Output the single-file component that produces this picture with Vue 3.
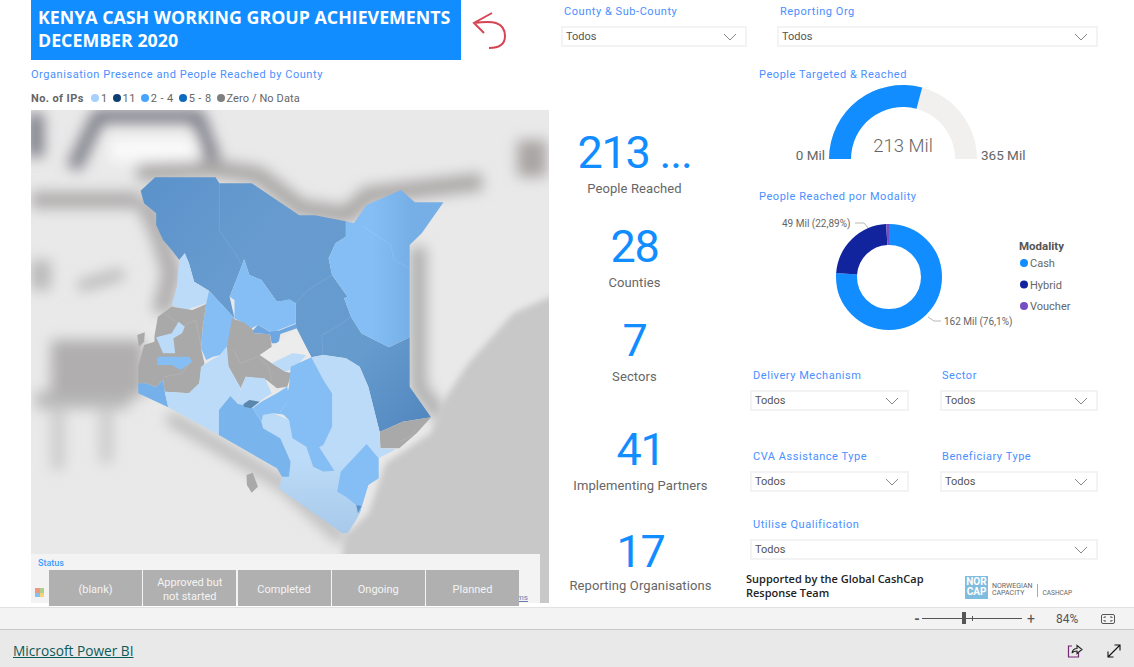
<template>
  <div class="page">
    <div class="report">
      <!-- left: title and map -->
      <div class="left">
        <div class="head">
          <h1 class="title">KENYA CASH WORKING GROUP ACHIEVEMENTS<br />DECEMBER 2020</h1>
          <svg class="back" width="36" height="38" viewBox="0 0 36 38">
            <path d="M20 1 L2 11 L12 21 M2 11 C10 10 18 9 24 11 C30 13 33 18 33 24 C33 32 27 36 17 36" />
          </svg>
        </div>
        <div class="visual-title">Organisation Presence and People Reached by County</div>
        <div class="legend">
          <b>No. of IPs</b>
          <span v-for="l in mapLegend" :key="l.text" class="legend-item">
            <i :style="{ background: l.color }"></i>{{ l.text }}
          </span>
        </div>
        <div class="map">
          <svg class="map-svg" viewBox="32 30 1502 1479" preserveAspectRatio="none">
            <defs>
              <filter id="blur" x="-20%" y="-20%" width="140%" height="140%"><feGaussianBlur stdDeviation="20" /></filter>
              <filter id="soft" x="-20%" y="-20%" width="140%" height="140%"><feGaussianBlur stdDeviation="10" /></filter>
              <clipPath id="frame"><rect x="32" y="30" width="1502" height="1479" /></clipPath>
              <linearGradient id="darkFill" gradientUnits="userSpaceOnUse" x1="350" y1="250" x2="1190" y2="950">
                <stop offset="0" stop-color="#5a92ca" />
                <stop offset="0.35" stop-color="#689cd0" />
                <stop offset="0.75" stop-color="#669bce" />
                <stop offset="1" stop-color="#5288bf" />
              </linearGradient>
              <linearGradient id="eastFill" gradientUnits="userSpaceOnUse" x1="1020" y1="0" x2="1135" y2="0">
                <stop offset="0" stop-color="#85bef5" />
                <stop offset="1" stop-color="#76aee6" />
              </linearGradient>
              <linearGradient id="southFill" gradientUnits="userSpaceOnUse" x1="0" y1="1080" x2="0" y2="1300">
                <stop offset="0" stop-color="#bcdbf8" />
                <stop offset="1" stop-color="#a8c9ea" />
              </linearGradient>
            </defs>
            <rect x="32" y="30" width="1502" height="1479" fill="#e9e9e9" />
            <g clip-path="url(#frame)">
              <g filter="url(#blur)" fill="none" stroke-linejoin="round">
                <path d="M45 40 V170" stroke="#7f7f8a" stroke-width="48" />
                <path d="M155 205 L228 48 H515 L570 205" stroke="#7f7f8a" stroke-width="42" />
                <path d="M32 300 H350" stroke="#aeabab" stroke-width="50" />
                <path d="M340 218 L560 205 L690 225 L815 325 L950 345 L1010 285 L1340 245" stroke="#aba7a7" stroke-width="52" />
                <path d="M360 300 L405 400 L440 520 L410 640" stroke="#b0aeae" stroke-width="56" />
                <path d="M1485 120 V230" stroke="#aaa5a5" stroke-width="86" />
                <path d="M1155 440 V860 L1220 950" stroke="#acacac" stroke-width="44" />
                <path d="M430 950 L760 1150 L940 1320" stroke="#b8b8b8" stroke-width="38" />
                <path d="M45 900 H320" stroke="#bababa" stroke-width="54" />
                <path d="M110 930 V1110 M250 930 V1090" stroke="#cacaca" stroke-width="38" />
                <path d="M170 560 L300 520" stroke="#b8b8b8" stroke-width="34" />
                <path d="M60 480 V570" stroke="#bababa" stroke-width="60" />
                <rect x="90" y="720" width="270" height="170" fill="#b0aeae" />
                <rect x="260" y="115" width="250" height="70" fill="#fafafa" />
              </g>
              <polygon filter="url(#soft)" fill="#c8c8c8" points="1560,580 1430,640 1300,790 1230,900 1190,1000 1060,1090 1010,1240 940,1310 920,1530 1560,1530" />
            </g>
            <polygon v-for="(r, i) in regions" :key="i" :points="r.points" :fill="r.fill" />
            <polyline v-for="(b, i) in borders" :key="'b' + i" :points="b" fill="none" stroke="#fff" stroke-opacity="0.15" stroke-width="2" />
          </svg>
          <div class="status-panel">
            <span class="status-label">Status</span>
            <span class="bing"><i></i><i></i><i></i><i></i></span>
            <span class="terms">Terms</span>
          </div>
          <div class="status-buttons">
            <div v-for="s in statuses" :key="s" class="status-btn">{{ s }}</div>
          </div>
        </div>
      </div>

      <!-- right: slicers, cards and charts -->
      <div class="right">
        <div class="top-slicers">
          <div v-for="s in topSlicers" :key="s.label" class="slicer" :class="s.cls">
            <div class="visual-title">{{ s.label }}</div>
            <div class="dropdown">
              Todos
              <svg width="14" height="8" viewBox="0 0 14 8"><path d="M1 1 L7 7 L13 1" /></svg>
            </div>
          </div>
        </div>
        <div class="lower">
          <div class="kpis">
            <div v-for="k in kpis" :key="k.label" class="kpi">
              <div class="kpi-num">{{ k.value }}</div>
              <div class="kpi-label">{{ k.label }}</div>
            </div>
          </div>
          <div class="charts">
            <div class="visual-title chart-title first">People Targeted &amp; Reached</div>
            <svg class="gauge" width="352" height="88" viewBox="746 82 352 88">
              <path :d="gaugeArc(0, 1)" fill="#f1f0ef" />
              <path :d="gaugeArc(0, 213 / 365)" fill="#118dff" />
              <text x="903" y="152" text-anchor="middle" class="gauge-value">213 Mil</text>
              <text x="825" y="160" text-anchor="end" class="gauge-end">0 Mil</text>
              <text x="981" y="160" class="gauge-end">365 Mil</text>
            </svg>
            <div class="visual-title chart-title">People Reached por Modality</div>
            <svg class="donut" width="352" height="149" viewBox="746 204 352 149">
              <circle
                v-for="d in donut"
                :key="d.name"
                cx="889"
                cy="277"
                r="42.5"
                fill="none"
                stroke-width="21"
                :stroke="d.color"
                :stroke-dasharray="d.dash"
                :stroke-dashoffset="d.offset"
                transform="rotate(-90 889 277)"
              />
              <path d="M855 223 H864 L868 228 M928 317 L934 321 H941" fill="none" stroke="#b8b8b8" />
              <text x="782" y="227" class="donut-label">49 Mil (22,89%)</text>
              <text x="944" y="325" class="donut-label">162 Mil (76,1%)</text>
              <text x="1019" y="250" class="legend-title">Modality</text>
              <g v-for="(d, i) in donut" :key="'l' + d.name">
                <circle cx="1024" :cy="263 + i * 21.5" r="4" :fill="d.color" />
                <text x="1030" :y="267 + i * 21.5" class="legend-text">{{ d.name }}</text>
              </g>
            </svg>
            <div class="slicer-grid">
              <div v-for="s in slicers" :key="s.label" class="slicer" :class="s.cls">
                <div class="visual-title">{{ s.label }}</div>
                <div class="dropdown">
                  Todos
                  <svg width="14" height="8" viewBox="0 0 14 8"><path d="M1 1 L7 7 L13 1" /></svg>
                </div>
              </div>
            </div>
            <div class="support">
              <div class="support-text">Supported by the Global CashCap<br />Response Team</div>
              <div class="logo">
                <div class="nor">NOR<br />CAP</div>
                <div class="nor-name">NORWEGIAN<br />CAPACITY</div>
                <div class="nor-sep">CASHCAP</div>
              </div>
            </div>
          </div>
        </div>
      </div>
    </div>

    <div class="zoombar">
      <span class="zoom-sign minus">-</span>
      <div class="slider"><i class="tick"></i><i class="thumb"></i></div>
      <span class="zoom-sign">+</span>
      <span class="zoom-pct">84%</span>
      <svg class="fit" width="14" height="10" viewBox="0 0 14 10">
        <rect x="0.5" y="0.5" width="13" height="9" rx="1.5" fill="none" stroke="#555" />
        <path d="M3 4 V3 H5 M9 3 H11 V4 M11 6 V7 H9 M5 7 H3 V6" fill="none" stroke="#555" />
      </svg>
    </div>

    <div class="footer">
      <a class="pbi-link">Microsoft Power BI</a>
      <div class="foot-icons">
        <svg width="16" height="14" viewBox="0 0 16 14" fill="none">
          <path d="M5 2 H1.500 V13 H11.500 V9" stroke="#742774" stroke-width="1.2" />
          <path d="M5 9 C5.500 6 8 4.500 10 4.500 V1.500 L15 5.500 L10 9.500 V7 C8 7 6 7.500 5 9 Z" stroke="#222" stroke-width="1.1" />
        </svg>
        <svg width="14" height="14" viewBox="0 0 14 14" fill="none" stroke="#111" stroke-width="1.1">
          <path d="M1 13 L13 1 M7.500 1 H13 V6.500 M1 7.500 V13 H6.500" />
        </svg>
      </div>
    </div>
  </div>
</template>

<script setup>
const mapLegend = [
  { text: '1', color: '#a6d1fb' },
  { text: '11', color: '#0e3f72' },
  { text: '2 - 4', color: '#48a5fd' },
  { text: '5 - 8', color: '#0d6abf' },
  { text: 'Zero / No Data', color: '#7f7f7f' }
]

const statuses = ['(blank)', 'Approved but not started', 'Completed', 'Ongoing', 'Planned']

const topSlicers = [
  { label: 'County & Sub-County', cls: 'w186' },
  { label: 'Reporting Org', cls: 'w321' }
]

const slicers = [
  { label: 'Delivery Mechanism', cls: '' },
  { label: 'Sector', cls: '' },
  { label: 'CVA Assistance Type', cls: 'row2' },
  { label: 'Beneficiary Type', cls: 'row2' },
  { label: 'Utilise Qualification', cls: 'wide' }
]

const kpis = [
  { value: '213 ...', label: 'People Reached' },
  { value: '28', label: 'Counties' },
  { value: '7', label: 'Sectors' },
  { value: '41', label: 'Implementing Partners' },
  { value: '17', label: 'Reporting Organisations' }
]

// map shapes, painted back to front
const LIGHT = '#bcdbf8'
const MID = '#85bef5'
const GREY = '#a9a9a9'
const regions = [
  { fill: 'url(#darkFill)', points: '350,272 392,232 567,232 578,250 672,250 810,346 855,346 945,364 945,410 915,430 895,475 905,525 950,590 940,595 960,650 990,700 1070,742 1130,712 1130,860 1192,952 1110,965 1043,996 1010,860 985,800 945,775 880,765 845,772 800,680 800,610 782,600 745,605 700,540 665,525 650,478 635,520 608,590 622,655 548,572 505,545 490,490 478,460 462,480 440,450 415,420 395,375 395,340 360,310' },
  { fill: 'url(#eastFill)', points: '945,364 968,370 1005,315 1105,270 1145,307 1228,307 1165,400 1130,435 1130,712 1070,742 990,700 960,650 940,595 950,590 905,525 895,475 915,430 945,410' },
  { fill: MID, points: '650,478 665,525 700,540 745,605 782,598 800,610 800,670 750,690 735,700 690,675 672,685 622,655 622,600 608,590 635,520' },
  { fill: '#6da6e0', points: '672,695 690,675 725,695 750,692 800,672 803,685 755,702 750,730 730,730 725,703 680,700' },
  { fill: LIGHT, points: '462,480 478,460 490,490 505,545 548,572 540,610 480,630 440,615 455,560' },
  { fill: MID, points: '548,572 622,655 600,740 580,765 560,770 540,780 525,745 530,680 540,610' },
  { fill: '#ececec', points: '695,765 800,688 845,772 800,760 785,760 730,790' },
  { fill: GREY, points: '390,708 400,650 440,620 500,630 540,612 530,680 525,745 535,790 525,810 520,850 490,880 420,875 415,840 395,862 365,850 343,850 343,800 360,735 390,725' },
  { fill: GREY, points: '340,705 362,697 360,725 345,740' },
  { fill: GREY, points: '657,1125 675,1118 690,1160 672,1178 658,1155' },
  { fill: GREY, points: '600,740 615,655 650,668 672,685 680,700 725,703 730,740 695,765 730,790 770,815 788,820 775,860 745,865 715,840 655,830 640,865 605,800 597,780' },
  { fill: GREY, points: '1043,996 1110,965 1192,952 1150,1000 1100,1045 1045,1045' },
  { fill: LIGHT, points: '395,712 440,700 460,665 478,680 470,700 445,715 450,760 415,760' },
  { fill: MID, points: '398,770 490,770 500,785 465,810 440,795 398,795' },
  { fill: '#75b0ea', points: '343,850 365,850 395,862 415,840 420,875 430,922 343,880' },
  { fill: LIGHT, points: '420,875 490,880 520,850 525,800 555,780 580,765 600,740 605,800 640,865 635,890 632,912 610,888 577,930 577,1005 430,922' },
  { fill: LIGHT, points: '640,865 655,830 710,835 730,880 700,900 675,925 650,915 632,912 635,890' },
  { fill: LIGHT, points: '730,790 790,760 830,765 800,800 770,815' },
  { fill: 'url(#southFill)', points: '845,772 880,765 945,775 985,800 1010,860 1043,996 1045,1045 1090,1048 1040,1075 1040,1135 1010,1155 985,1240 975,1260 950,1300 935,1300 750,1165 760,1130 780,1130 785,1085 755,1015 705,985 700,965 705,945 735,940 780,960 790,1015 830,1040 850,1100 880,1115 912,1112 868,1042 880,1035 905,980 905,880 880,840' },
  { fill: MID, points: '845,772 880,840 905,880 905,980 880,1035 868,1042 912,1112 880,1115 850,1100 830,1040 790,1015 780,960 755,935 770,900 780,860 785,800' },
  { fill: '#7ab4ec', points: '577,930 610,888 632,912 650,915 675,925 700,965 705,985 755,1015 785,1085 780,1130 760,1130 745,1105 577,1005' },
  { fill: MID, points: '675,925 700,905 745,880 775,860 782,900 755,935 775,945 735,940 705,945 700,965' },
  { fill: MID, points: '1005,1032 1040,1075 1040,1135 1010,1155 985,1240 975,1215 945,1190 920,1175 930,1115' },
  { fill: '#5f93c6', points: '975,1215 990,1218 980,1240' },
  { fill: '#5a87ad', points: '648,912 665,900 695,905 670,925 650,920' }
]

const borders = [
  '578,250 578,390 600,425 625,460 640,490',
  '800,610 835,570 905,525',
  '995,380 1075,435 1085,480 1130,505',
  '960,650 920,680 875,705 878,765',
  '420,640 470,680 510,660 525,740',
  '620,750 640,790 690,770 720,800 730,840',
  '420,830 470,820 490,790',
  '1100,1025 1130,1010 1150,990',
  '755,935 775,905'
]

// gauge: t runs 0..1 from left to right over the half circle
function gaugeArc(from, to) {
  const cx = 903
  const cy = 159
  const pt = (r, t) => {
    const a = Math.PI * (1 - t)
    return `${(cx + r * Math.cos(a)).toFixed(2)} ${(cy - r * Math.sin(a)).toFixed(2)}`
  }
  return `M${pt(74, from)} A74 74 0 0 1 ${pt(74, to)} L${pt(52, to)} A52 52 0 0 0 ${pt(52, from)} Z`
}

const circ = 2 * Math.PI * 42.5
const modality = [
  { name: 'Cash', share: 0.761, color: '#118dff' },
  { name: 'Hybrid', share: 0.2289, color: '#12239e' },
  { name: 'Voucher', share: 0.0101, color: '#744ec2' }
]
let run = 0
const donut = modality.map((m) => {
  const item = { ...m, dash: `${m.share * circ} ${circ}`, offset: -run * circ }
  run += m.share
  return item
})
</script>

<style>
html, body { margin: 0; background: #fff; }
</style>

<style scoped>
.page {
  width: 1134px;
  height: 667px;
  display: flex;
  flex-direction: column;
  overflow: hidden;
  font-family: Roboto, "Liberation Sans", sans-serif;
  background: #fff;
}
.report {
  height: 607px;
  display: flex;
}
.left {
  width: 518px;
  margin-left: 31px;
  flex: none;
}
.head {
  display: flex;
  height: 60px;
}
.title {
  width: 430px;
  height: 60px;
  box-sizing: border-box;
  margin: 0;
  padding: 6px 0 0 7px;
  background: #118dff;
  color: #fff;
  font-family: "Open Sans", sans-serif;
  font-size: 17.8px;
  line-height: 23px;
  font-weight: 700;
  white-space: nowrap;
}
.back {
  margin: 12px 0 0 11px;
  fill: none;
  stroke: #d64554;
  stroke-width: 2;
}
.visual-title {
  color: #4a8fff;
  font-size: 11px;
  line-height: 14px;
  letter-spacing: 0.55px;
  white-space: nowrap;
}
.left > .visual-title {
  margin-top: 8px;
}
.legend {
  display: flex;
  align-items: center;
  height: 14px;
  margin-top: 9px;
  color: #666;
  font-size: 11px;
  letter-spacing: 0.4px;
}
.legend b {
  width: 60px;
}
.legend-item {
  display: flex;
  align-items: center;
  margin-right: 5px;
}
.legend-item:last-child {
  letter-spacing: 0.1px;
}
.legend-item i {
  width: 8px;
  height: 8px;
  border-radius: 50%;
  margin-right: 2px;
}
.map {
  position: relative;
  height: 493px;
  margin-top: 5px;
}
.map-svg {
  display: block;
  width: 518px;
  height: 493px;
}
.status-panel {
  position: absolute;
  left: 0;
  right: 9px;
  bottom: 0;
  height: 49px;
  background: #f3f3f3;
}
.status-label {
  position: absolute;
  left: 7px;
  top: 4px;
  color: #3f9bff;
  font-size: 9px;
  font-weight: 500;
}
.bing {
  position: absolute;
  left: 4px;
  top: 34px;
  width: 9px;
  display: grid;
  grid-template-columns: 1fr 1fr;
  opacity: 0.6;
}
.bing i { height: 4.500px; }
.bing i:nth-child(1) { background: #f05a3a; }
.bing i:nth-child(2) { background: #80bb3f; }
.bing i:nth-child(3) { background: #3ca5e8; }
.bing i:nth-child(4) { background: #fbbc2c; }
.terms {
  position: absolute;
  right: 12px;
  top: 39px;
  color: #6a7fb5;
  font-size: 8px;
  text-decoration: underline;
}
.status-buttons {
  position: absolute;
  left: 18px;
  top: 460px;
  display: flex;
  gap: 1.250px;
}
.status-btn {
  width: 93px;
  height: 36px;
  box-sizing: border-box;
  padding: 4px 8px 0;
  display: flex;
  align-items: center;
  justify-content: center;
  text-align: center;
  background: #b0b0b0;
  color: #f4f4f4;
  font-size: 11px;
  line-height: 14px;
}
.right {
  flex: 1;
  min-width: 0;
}
.top-slicers {
  height: 47px;
  padding: 5px 0 0 12px;
  box-sizing: border-box;
  display: flex;
  gap: 30px;
}
.slicer .visual-title {
  padding-left: 3px;
}
.w186 { width: 186px; }
.w321 { width: 321px; }
.dropdown {
  height: 21px;
  margin-top: 7px;
  box-sizing: border-box;
  padding: 0 8px 0 3px;
  display: flex;
  align-items: center;
  justify-content: space-between;
  border: 2px solid #f3f3f3;
  color: #555;
  font-size: 11px;
}
.dropdown svg {
  fill: none;
  stroke: #888;
}
.lower {
  display: flex;
}
.kpis {
  width: 197px;
  padding-right: 26px;
  box-sizing: border-box;
  text-align: center;
  flex: none;
}
.kpi { margin-top: 24px; }
.kpi:nth-child(1) { margin-top: 81px; }
.kpi:nth-child(4) { margin-top: 39px; padding-left: 12px; }
.kpi:nth-child(5) { margin-top: 32px; padding-left: 12px; }
.kpi:nth-child(5) .kpi-label { margin-top: -1px; }
.kpi-num {
  height: 50px;
  color: #118dff;
  font-size: 45px;
  font-weight: 400;
  line-height: 50px;
  letter-spacing: -1.2px;
  white-space: nowrap;
}
.kpi-label {
  height: 19px;
  margin-top: 1px;
  color: #666;
  font-size: 13px;
  line-height: 19px;
  letter-spacing: 0.1px;
  white-space: nowrap;
}
.charts {
  width: 352px;
  flex: none;
}
.chart-title {
  margin: 20px 0 0 13px;
}
.chart-title.first {
  margin-top: 21px;
}
.gauge,
.donut {
  display: block;
}
.gauge-value {
  fill: #666;
  font-size: 18.5px;
  font-weight: 300;
}
.gauge-end {
  fill: #666;
  font-size: 13.500px;
}
.donut-label {
  fill: #666;
  font-size: 10px;
}
.legend-title {
  fill: #555;
  font-size: 11.500px;
  font-weight: 700;
}
.legend-text {
  fill: #666;
  font-size: 11px;
}
.slicer-grid {
  display: grid;
  grid-template-columns: 159px 158px;
  column-gap: 31px;
  margin: 16px 0 0 4px;
}
.slicer-grid .slicer:nth-child(2n) .visual-title { padding-left: 2px; }
.slicer-grid .row2 { margin-top: 39px; }
.slicer-grid .wide {
  grid-column: 1 / -1;
  margin-top: 26px;
}
.support {
  display: flex;
  margin-top: 12px;
}
.support-text {
  width: 219px;
  color: #222;
  font-family: "Open Sans", sans-serif;
  font-size: 11px;
  line-height: 14px;
  font-weight: 600;
  white-space: nowrap;
}
.logo {
  display: flex;
  align-items: flex-end;
  height: 23px;
  margin-top: 4px;
}
.nor {
  width: 23px;
  height: 23px;
  background: #7fbde0;
  color: #fff;
  font-size: 10px;
  line-height: 10px;
  font-weight: 700;
  text-align: center;
  padding-top: 1px;
  box-sizing: border-box;
}
.nor-name {
  margin-left: 4px;
  color: #666;
  font-size: 7px;
  line-height: 7px;
  padding-bottom: 2px;
}
.nor-sep {
  margin-left: 4px;
  padding-left: 5px;
  height: 13px;
  margin-bottom: 2px;
  border-left: 1px solid #aaa;
  color: #666;
  font-size: 6.500px;
  line-height: 18px;
}
.zoombar {
  height: 23px;
  box-sizing: border-box;
  border-top: 1px solid #e1e1e1;
  border-bottom: 1px solid #c8c8c8;
  background: #f3f3f3;
  display: flex;
  align-items: center;
  padding-left: 912px;
  color: #555;
}
.zoom-sign {
  font-size: 14px;
  width: 10px;
  text-align: center;
}
.minus { font-weight: 700; }
.slider {
  position: relative;
  width: 100px;
  height: 1px;
  margin: 0 4px 0 0;
  background: #555;
}
.thumb {
  position: absolute;
  left: 40px;
  top: -6px;
  width: 4px;
  height: 12px;
  background: #555;
}
.tick {
  position: absolute;
  left: 50px;
  top: -2px;
  width: 1px;
  height: 5px;
  background: #555;
}
.zoom-pct {
  margin-left: 20px;
  font-size: 12px;
  width: 26px;
}
.fit { margin-left: 19px; }
.footer {
  height: 37px;
  background: #e9e9e9;
  display: flex;
  align-items: center;
  justify-content: space-between;
  padding: 4px 13px 0;
  box-sizing: border-box;
}
.pbi-link {
  color: #0c5b5b;
  font-family: "Open Sans", sans-serif;
  font-size: 13.700px;
  text-decoration: underline;
}
.foot-icons {
  display: flex;
  gap: 24px;
  align-items: center;
}
</style>
